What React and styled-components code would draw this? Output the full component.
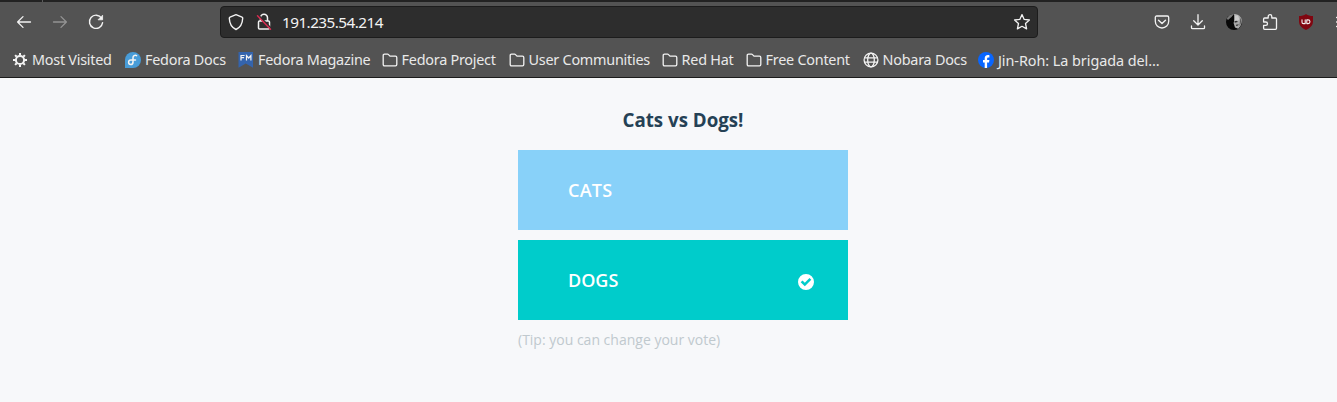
import React from 'react';
import styled, { createGlobalStyle } from 'styled-components';

const GlobalStyle = createGlobalStyle`
  * { box-sizing: border-box; }
  body { margin: 0; background: #f7f8f9; overflow: hidden; }
`;

const Window = styled.div`
  height: 402px;
  overflow: hidden;
  background: #f7f8fa;
  font-family: 'Noto Sans', sans-serif;
`;

const Chrome = styled.header`
  height: 78px;
  background: #535353;
  color: #fbfbfe;
  border-bottom: 1px solid #1c1c1c;
`;

const TabEdge = styled.div`
  height: 2px;
  padding-left: 42px;
  background: #222222;

  &::before {
    content: '';
    display: block;
    width: 1px;
    height: 2px;
    background: #5c5c5c;
  }
`;

const NavBar = styled.div`
  display: flex;
  align-items: center;
  height: 40px;
  padding: 0 0 0 15px;
`;

const NavButtons = styled.div`
  display: flex;
  flex: none;
  gap: 18px;
  width: 205px;
`;

const IconSvg = styled.svg`
  display: block;
  flex: none;
  width: ${(p) => p.$size || 18}px;
  height: ${(p) => p.$size || 18}px;
  fill: none;
  stroke: #f3f3f3;
  stroke-width: 1.3;
  stroke-linecap: round;
  stroke-linejoin: round;
  opacity: ${(p) => (p.$dim ? 0.4 : 1)};
`;

const AddressBar = styled.div`
  display: flex;
  align-items: center;
  flex: none;
  width: 818px;
  height: 32px;
  padding: 0 6px 0 6px;
  background: #2d2d2d;
  border: 1px solid #1c1c1c;
  border-radius: 4px;
`;

const AddressIcons = styled.div`
  display: flex;
  gap: 10px;
  width: 55px;
`;

const Address = styled.span`
  flex: 1;
  font-size: 15.3px;
  line-height: 20px;
  letter-spacing: -0.55px;
  color: #f4f4f4;
`;

const Extensions = styled.div`
  display: flex;
  align-items: center;
  gap: 18px;
  margin-left: 115px;
`;

const Bookmarks = styled.nav`
  display: flex;
  height: 35px;
  padding-left: 12px;
`;

const Bookmark = styled.div`
  display: flex;
  align-items: center;
  gap: 4px;
  flex: none;
  width: ${(p) => p.$width}px;
  white-space: nowrap;
  font-size: 14.4px;
  line-height: 20px;
  color: #e9e9e9;
`;

const Label = styled.span`
  padding-top: ${(p) => (p.$lowered ? 2 : 0)}px;
  letter-spacing: ${(p) => (p.$lowered ? -0.05 : -0.25)}px;
`;

const Poll = styled.main`
  width: 330px;
  margin: 0 0 0 518px;
  padding-top: 30px;
  font-family: 'Open Sans', sans-serif;
`;

const Title = styled.h3`
  margin: 0 0 18px;
  text-align: center;
  font-size: 18.72px;
  line-height: 24px;
  font-weight: 700;
  color: #254155;
`;

const Choice = styled.button`
  display: flex;
  align-items: center;
  justify-content: space-between;
  width: 330px;
  height: 80px;
  margin: 0 0 10px;
  padding: 0 34px 0 50px;
  border: 0;
  background: ${(p) => p.$color};
  color: #ffffff;
  font-family: inherit;
  font-size: 18px;
  line-height: 24px;
  font-weight: 600;
  text-align: left;
`;

const ChoiceLabel = styled.span`
  letter-spacing: ${(p) => p.$tracking || 0}px;
`;

const Check = styled(IconSvg)`
  margin-top: 3px;
  fill: #ffffff;
  stroke: none;
`;

const Tip = styled.div`
  font-size: 14px;
  line-height: 20px;
  color: #c0c9ce;
`;

const BackIcon = () => (
  <IconSvg viewBox="0 0 18 18"><path d="M15.5 9H2.6M8 3.6 2.6 9 8 14.4" /></IconSvg>
);
const ForwardIcon = () => (
  <IconSvg $dim viewBox="0 0 18 18"><path d="M2.5 9h12.9M10 3.6 15.4 9 10 14.4" /></IconSvg>
);
const ReloadIcon = () => (
  <IconSvg viewBox="0 0 18 18">
    <path d="M14.6 5.2A6.6 6.6 0 1 0 15.6 9.6" strokeWidth="1.4" />
    <path d="M15.6 2.6v4.2h-4.2Z" fill="#f3f3f3" strokeWidth="0.8" />
  </IconSvg>
);
const ShieldIcon = () => (
  <IconSvg viewBox="0 0 18 18">
    <path d="M9 1.7 15 4.1c.5.2.8.6.7 1.1-.2 5.4-2.3 9.2-6.7 11.3C4.6 14.4 2.5 10.6 2.3 5.2c0-.5.2-.9.7-1.1Z" strokeWidth="1.4" />
  </IconSvg>
);
const LockIcon = () => (
  <IconSvg viewBox="0 0 18 18">
    <path d="M5.5 8V4.8a3.5 3.5 0 0 1 7 0V8M4.5 8h9q1 0 1 1v6q0 1-1 1h-9q-1 0-1-1V9q0-1 1-1Z" strokeWidth="1.5" />
    <path d="M3.6 2.3 16.4 15.6" stroke="#2d2d2d" strokeWidth="1.5" />
    <path d="M2.5 2.8 15.5 16.2" stroke="#d62b50" strokeWidth="1.5" />
  </IconSvg>
);
const StarIcon = () => (
  <IconSvg viewBox="0 0 18 18">
    <path d="m9 1.6 2.2 4.8 5.2.6-3.9 3.5 1.1 5.4L9 13.3l-4.6 2.6 1.1-5.4L1.6 7l5.2-.6Z" />
  </IconSvg>
);
const PocketIcon = () => (
  <IconSvg viewBox="0 0 18 18">
    <path d="M3.7 3h10.6q1.4 0 1.4 1.4v3.9a6.7 6.7 0 0 1-13.4 0V4.4Q2.3 3 3.7 3Z" />
    <path d="m5.5 7.2 3.5 3.3 3.5-3.3" strokeWidth="1.4" />
  </IconSvg>
);
const DownloadIcon = () => (
  <IconSvg viewBox="0 0 18 18"><path d="M9 1.7v10M4.7 7.7 9 12l4.3-4.3M2.5 13v1.7q0 1 1 1h11q1 0 1-1V13" /></IconSvg>
);
const PortraitIcon = () => (
  <IconSvg viewBox="0 0 18 18">
    <g stroke="none">
      <circle cx="9" cy="9" r="8" fill="#080808" />
      <path d="M1.8 5.8C3.5 2 6.5 1 9 1L6.5 4 3 7Z" fill="#777777" />
      <path d="M9 1c4 0 7 2 7.800 5.500.3 4-1.200 7.300-3.700 9.200L10 14.500 8.600 10l.8-3Z" fill="#a9a9a9" />
      <path d="m10 2.400 3-.2 1.400 4-2 2.300-3-.3Z" fill="#cccccc" />
      <path d="m9.500 8 2.800-.3.4 1.300-2.900.8ZM11 11.800l2.700-.5-.6 1.300-1.900.5Z" fill="#333333" />
      <path d="M15.300 4.500c1 2 1 6-.8 8.700Z" fill="#555555" />
    </g>
  </IconSvg>
);
const PuzzleIcon = () => (
  <IconSvg viewBox="0 0 18 18">
    <path d="M2.6 7.6V6q0-1 1-1H7.2V3.5a1.8 1.8 0 0 1 3.6 0V5h3.700q1 0 1 1v9.300q0 1-1 1H3.600q-1 0-1-1v-2.900h2.200a1.700 1.700 0 0 0 0-3.400H2.600Z" />
  </IconSvg>
);
const BlockerIcon = () => (
  <IconSvg viewBox="0 0 18 18">
    <path d="M9 1c2 1.500 4.300 2 7 2v5c0 4.800-3 7.100-7 9-4-1.900-7-4.200-7-9V3c2.700 0 5-.5 7-2Z" fill="#800610" stroke="none" />
    <path d="M5 6.800v2.500q0 1.300 1.400 1.300H8.200V6.800M9.800 6.900h1.300a1.800 1.800 0 0 1 0 3.700H9.800Z" strokeWidth="1.1" />
  </IconSvg>
);
const MenuIcon = () => (
  <IconSvg viewBox="0 0 18 18"><path d="M3.6 4.500h12M3.600 9h12M3.600 13.500h12" /></IconSvg>
);
const GearIcon = () => (
  <IconSvg $size={16} viewBox="0 0 16 16">
    <circle cx="8" cy="8" r="4.1" strokeWidth="2" />
    <path d="M8 1v2.300M8 12.700V15M1 8h2.300M12.700 8H15M3.100 3.100l1.600 1.600M11.300 11.300l1.600 1.600M3.100 12.900l1.600-1.600M11.300 4.700l1.600-1.600" strokeWidth="2" strokeLinecap="butt" />
  </IconSvg>
);
const FolderIcon = () => (
  <IconSvg $size={16} viewBox="0 0 16 16">
    <path d="M1.200 12.500v-9q0-1.300 1.300-1.300h3.100q.5 0 .9.400l1.500 1.500h5.500q1.300 0 1.300 1.300v7.100q0 1.300-1.300 1.300h-11q-1.300 0-1.300-1.300Z" />
  </IconSvg>
);
const GlobeIcon = () => (
  <IconSvg $size={16} viewBox="0 0 16 16">
    <circle cx="8" cy="8" r="6.9" /><ellipse cx="8" cy="8" rx="3.3" ry="6.9" /><path d="M1.700 5.800h12.600M1.700 10.200h12.600" />
  </IconSvg>
);
const FedoraIcon = () => (
  <IconSvg $size={16} viewBox="0 0 16 16">
    <path d="M0 15.900V8a8 8 0 1 1 8 8Z" fill="#489cd8" stroke="none" />
    <path d="M11.600 3.600C9.800 2.800 8 3.900 8 5.700v4.700a2.200 2.200 0 1 1-2.200-2.300h4.700" strokeWidth="1.5" />
  </IconSvg>
);
const MagazineIcon = () => (
  <IconSvg $size={16} viewBox="0 0 16 16">
    <path d="M.5 0h14.500v15.800L7.800 11.500.5 15.800Z" fill="#3464ad" stroke="none" />
    <path d="M3 8V3.500h3M3 5.700h2.500M8.500 8V3.500l2.200 2.500 2.200-2.500V8" strokeWidth="1.2" strokeLinecap="square" strokeLinejoin="miter" />
  </IconSvg>
);
const FacebookIcon = () => (
  <IconSvg $size={16} viewBox="0 0 16 16">
    <circle cx="8" cy="8" r="8" fill="#0866ff" stroke="none" />
    <path d="M6.700 16v-5.400H5V8.100h1.700V6.700c0-2.500 1.100-3.700 3.300-3.700.5 0 1.100.1 1.400.2v2.200h-.9c-1 0-1.400.4-1.400 1.500v1.200h2.300l-.4 2.500H9.100V16Z" fill="#ffffff" stroke="none" />
  </IconSvg>
);

const bookmarks = [
  { label: 'Most Visited', Icon: GearIcon, width: 113 },
  { label: 'Fedora Docs', Icon: FedoraIcon, width: 113 },
  { label: 'Fedora Magazine', Icon: MagazineIcon, width: 143.6 },
  { label: 'Fedora Project', Icon: FolderIcon, width: 127 },
  { label: 'User Communities', Icon: FolderIcon, width: 153 },
  { label: 'Red Hat', Icon: FolderIcon, width: 84 },
  { label: 'Free Content', Icon: FolderIcon, width: 117 },
  { label: 'Nobara Docs', Icon: GlobeIcon, width: 115.4 },
  { label: 'Jin-Roh: La brigada del…', Icon: FacebookIcon, width: 184, lowered: true },
];

export default function App() {
  return (
    <Window>
      <GlobalStyle />
      <Chrome>
        <TabEdge />
        <NavBar>
          <NavButtons><BackIcon /><ForwardIcon /><ReloadIcon /></NavButtons>
          <AddressBar>
            <AddressIcons><ShieldIcon /><LockIcon /></AddressIcons>
            <Address>191.235.54.214</Address>
            <StarIcon />
          </AddressBar>
          <Extensions>
            <PocketIcon /><DownloadIcon /><PortraitIcon /><PuzzleIcon /><BlockerIcon /><MenuIcon />
          </Extensions>
        </NavBar>
        <Bookmarks>
          {bookmarks.map(({ label, Icon, width, lowered }) => (
            <Bookmark key={label} $width={width}><Icon /><Label $lowered={lowered}>{label}</Label></Bookmark>
          ))}
        </Bookmarks>
      </Chrome>
      <Poll>
        <Title>Cats vs Dogs!</Title>
        <Choice $color="#88d1f9"><ChoiceLabel $tracking={0.25}>CATS</ChoiceLabel></Choice>
        <Choice $color="#00cccb">
          <ChoiceLabel>DOGS</ChoiceLabel>
          <Check $size={16} viewBox="0 0 16 16">
            <path fillRule="evenodd" d="M8 0a8 8 0 1 0 0 16A8 8 0 0 0 8 0ZM2.700 8.200 4.500 6.400l2.300 2.300 4.700-4.700 1.800 1.800-6.500 6.500Z" />
          </Check>
        </Choice>
        <Tip>(Tip: you can change your vote)</Tip>
      </Poll>
    </Window>
  );
}
